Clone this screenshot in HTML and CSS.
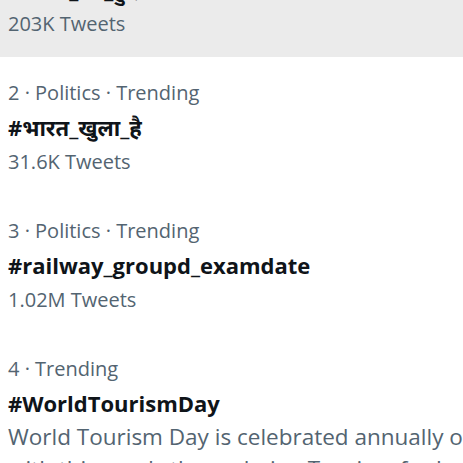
FILE: index.html
```html
<!DOCTYPE html>
<html>
<head>
<meta charset="utf-8">
<link rel="stylesheet" href="styles.css">
</head>
<body>
<div class="list">
  <div class="trend trend-first hovered">
    <div class="title">#भारत_बंद_हुए</div>
    <div class="meta">203K Tweets</div>
  </div>
  <div class="trend">
    <div class="meta">2 · Politics · Trending</div>
    <div class="title">#भारत_खुला_है</div>
    <div class="meta">31.6K Tweets</div>
  </div>
  <div class="trend">
    <div class="meta">3 · Politics · Trending</div>
    <div class="title">#railway_groupd_examdate</div>
    <div class="meta">1.02M Tweets</div>
  </div>
  <div class="trend">
    <div class="meta">4 · Trending</div>
    <div class="title">#WorldTourismDay</div>
    <div class="desc">World Tourism Day is celebrated annually on September 27<br>with this year's theme being Tourism for Inclusive Growth.</div>
  </div>
</div>
</body>
</html>
```

FILE: styles.css
```css
html, body {
  margin: 0;
  padding: 0;
  background: #ffffff;
  overflow: hidden;
}
body {
  width: 463px;
  height: 463px;
  font-family: "Open Sans", "Noto Sans", sans-serif;
}
.list {
  width: 700px;
}
.trend {
  padding: 19px 8px 16px;
}
.trend-first {
  margin-top: -81px;
  padding-top: 53px;
}
.hovered {
  background: #ebebeb;
}
.meta {
  font-size: 20px;
  line-height: 34px;
  color: #536471;
  white-space: nowrap;
}
.desc {
  font-size: 22.5px;
  line-height: 32px;
  color: #536471;
  white-space: nowrap;
}
.title {
  font-size: 22px;
  line-height: 35px;
  font-weight: 700;
  color: #0f1419;
  white-space: nowrap;
}
```
